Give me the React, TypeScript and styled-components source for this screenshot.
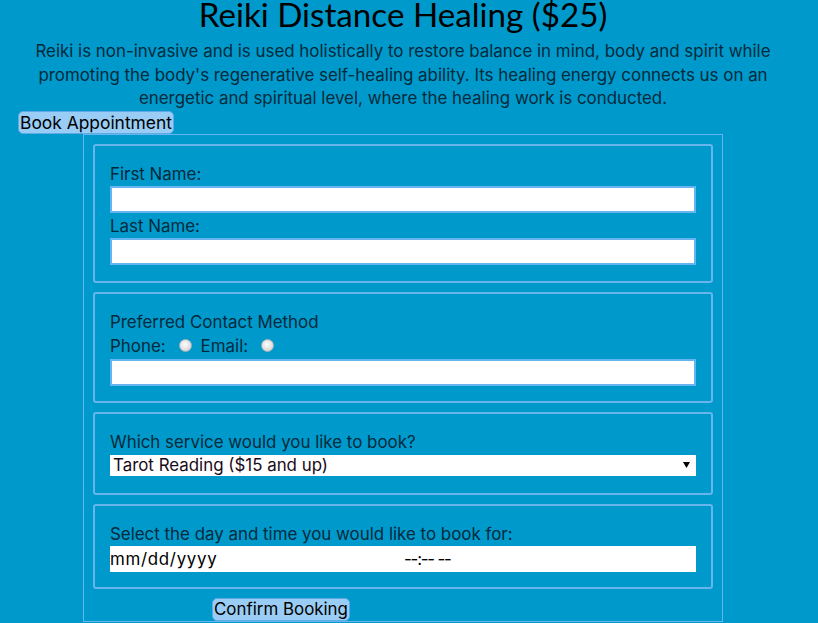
import React from "react";
import styled, { createGlobalStyle } from "styled-components";

const GlobalStyle = createGlobalStyle`
  html, body {
    margin: 0;
    padding: 0;
    background: #0099cc;
  }
  body {
    font-family: Inter, "Open Sans", sans-serif;
    color: #002a3a;
  }
  * { box-sizing: border-box; }
`;

const Page = styled.div`
  width: 806px;
  display: flex;
  flex-direction: column;
  align-items: stretch;
`;

const Title = styled.h1`
  margin: 0;
  font-family: Lato, "Open Sans", sans-serif;
  font-weight: 400;
  font-size: 33.2px;
  line-height: 29px;
  text-align: center;
  color: #000;
  white-space: nowrap;
`;

const Intro = styled.p`
  margin: 11px auto 0;
  max-width: 756px;
  font-size: 16.9px;
  line-height: 23.5px;
  text-align: center;
  color: #002a3a;
`;

const PillButton = styled.button<{ $left: number; $size: number; $mt: number }>`
  align-self: flex-start;
  margin: ${(p) => p.$mt}px 0 0 ${(p) => p.$left}px;
  padding: 0 1px;
  height: 23px;
  font-family: Inter, "Open Sans", sans-serif;
  font-size: ${(p) => p.$size}px;
  line-height: 21px;
  color: #000;
  background: #99cdf5;
  border: 1px solid #5ea9e6;
  border-radius: 5px;
  cursor: pointer;
`;

const FormBox = styled.form`
  margin-left: 83px;
  width: 640px;
  border: 1px solid #66b5ec;
  padding: 9px 9px 0;
  display: flex;
  flex-direction: column;
  gap: 9px;
`;

const Group = styled.fieldset<{ $pb: number }>`
  margin: 0;
  min-width: 0;
  border: 2px solid #66b5ec;
  border-radius: 3px;
  padding: 17px 15px ${(p) => p.$pb}px;
  display: flex;
  flex-direction: column;
`;

const Label = styled.label<{ $mt?: number }>`
  display: block;
  margin-top: ${(p) => p.$mt ?? 0}px;
  height: 23px;
  font-size: 16.9px;
  line-height: 23px;
  color: #002a3a;
`;

const TextField = styled.input<{ $mt?: number }>`
  display: block;
  width: 100%;
  height: 27px;
  margin: ${(p) => p.$mt ?? 0}px 0 0;
  border: 2px solid #64b5f0;
  background: #fff;
  outline: none;
  font-family: inherit;
  font-size: 16px;
`;

const RadioRow = styled.div`
  margin-top: 1px;
  height: 23px;
  display: flex;
  align-items: flex-start;
  font-size: 16.9px;
  line-height: 23px;
`;

const Radio = styled.input<{ $ml: number; $mr: number }>`
  appearance: none;
  -webkit-appearance: none;
  width: 13px;
  height: 13px;
  margin: 4px ${(p) => p.$mr}px 0 ${(p) => p.$ml}px;
  border-radius: 50%;
  border: 1px solid #a9b4ba;
  background: radial-gradient(circle at 45% 40%, #ffffff 0%, #ececec 35%, #c9c9c9 100%);
`;

const SelectWrap = styled.div`
  position: relative;
  margin-top: 1px;
  height: 21px;
  background: #fff;
`;

const Select = styled.select`
  appearance: none;
  -webkit-appearance: none;
  width: 100%;
  height: 21px;
  border: none;
  outline: none;
  background: transparent;
  padding: 0 0 0 3px;
  font-family: Inter, "Open Sans", sans-serif;
  font-size: 16.9px;
  line-height: 21px;
  color: #1a0a1a;
`;

const Caret = styled.svg`
  position: absolute;
  right: 6px;
  top: 7px;
  pointer-events: none;
`;

const DateTimeRow = styled.div`
  height: 26px;
  display: grid;
  grid-template-columns: 1fr 1fr;
  background: #fff;
`;

const DTField = styled.input<{ $pl: number; $ls: number }>`
  width: 100%;
  height: 26px;
  border: none;
  outline: none;
  background: #fff;
  padding: 0 0 0 ${(p) => p.$pl}px;
  font-family: Inter, "Open Sans", sans-serif;
  font-size: 16.9px;
  letter-spacing: ${(p) => p.$ls}px;
  color: #000;
`;

export default function App() {
  return (
    <>
      <GlobalStyle />
      <Page>
        <Title>Reiki Distance Healing ($25)</Title>
        <Intro>
          Reiki is non-invasive and is used holistically to restore balance in mind, body and
          spirit while promoting the body's regenerative self-healing ability. Its healing energy
          connects us on an energetic and spiritual level, where the healing work is conducted.
        </Intro>
        <PillButton type="button" $left={18} $size={17.4} $mt={0.5}>Book Appointment</PillButton>
        <FormBox onSubmit={(e) => e.preventDefault()}>
          <Group $pb={16}>
            <Label htmlFor="first">First Name:</Label>
            <TextField id="first" type="text" />
            <Label htmlFor="last" $mt={2}>Last Name:</Label>
            <TextField id="last" type="text" />
          </Group>
          <Group $pb={15}>
            <Label>Preferred Contact Method</Label>
            <RadioRow>
              <span>Phone:</span>
              <Radio type="radio" name="contact" $ml={13} $mr={9} />
              <span>Email:</span>
              <Radio type="radio" name="contact" $ml={13} $mr={0} />
            </RadioRow>
            <TextField type="text" $mt={1} />
          </Group>
          <Group $pb={17}>
            <Label htmlFor="service">Which service would you like to book?</Label>
            <SelectWrap>
              <Select id="service" defaultValue="tarot">
                <option value="tarot">Tarot Reading ($15 and up)</option>
                <option value="reiki">Reiki Distance Healing ($25)</option>
              </Select>
              <Caret width="7" height="6" viewBox="0 0 7 6">
                <path d="M0 0 H7 L3.5 6 Z" fill="#000" />
              </Caret>
            </SelectWrap>
          </Group>
          <Group $pb={15}>
            <Label>Select the day and time you would like to book for:</Label>
            <DateTimeRow>
              <DTField type="text" readOnly value="mm/dd/yyyy" $pl={0} $ls={0.7} />
              <DTField type="text" readOnly value="--:-- --" $pl={1} $ls={-1.2} />
            </DateTimeRow>
          </Group>
          <PillButton type="submit" $left={119} $size={16.9} $mt={0}>Confirm Booking</PillButton>
        </FormBox>
      </Page>
    </>
  );
}
